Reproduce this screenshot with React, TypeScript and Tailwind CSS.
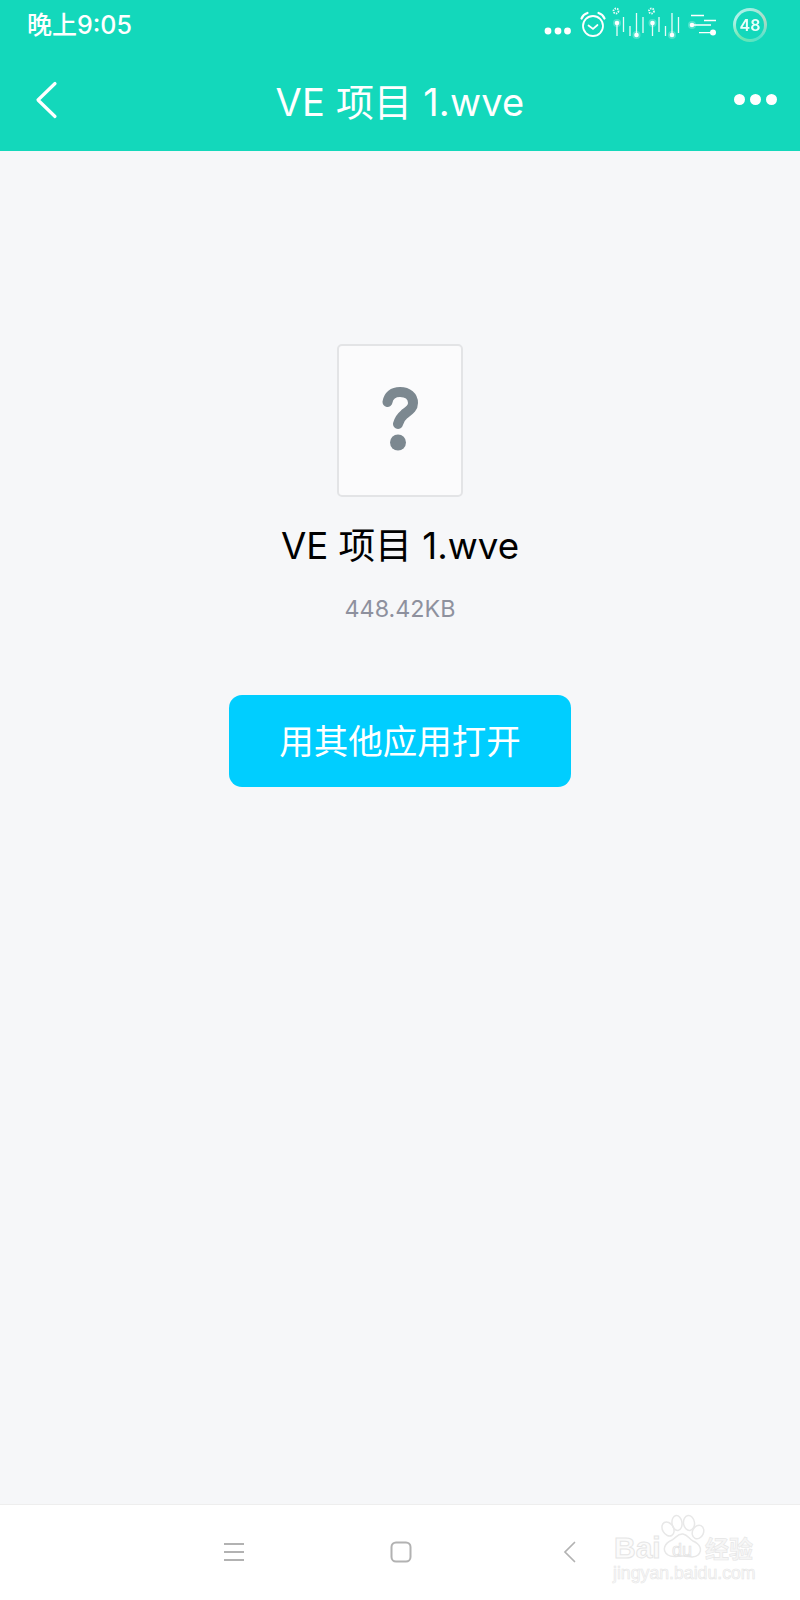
const CJK = "font-['Inter','Noto_Sans_CJK_SC',sans-serif]";

function SignalBars({ x }: { x: number }) {
  return (
    <g transform={`translate(${x} 0)`}>
      <g stroke="#fff" fill="none" strokeWidth="1.300" opacity="0.9">
        <path d="M0 22V36M6.500 17V32M13 26V36M19.500 13V36M26 17V33" />
        <circle cx="-1" cy="11" r="2.500" strokeWidth="1.800" strokeDasharray="1.500 1" />
      </g>
      <circle cx="0" cy="23" r="4" fill="#fff" opacity="0.25" />
      <circle cx="0" cy="23" r="2.300" fill="#fff" />
      <circle cx="19.500" cy="35" r="4" fill="#fff" opacity="0.25" />
      <circle cx="19.500" cy="35" r="2.300" fill="#fff" />
    </g>
  );
}

function StatusIcons() {
  return (
    <svg width="190" height="50" viewBox="0 0 190 50" className="block">
      <g fill="#fff">
        <circle cx="9" cy="31" r="3.400" />
        <circle cx="19" cy="31" r="3.400" />
        <circle cx="28.500" cy="31" r="3.400" />
      </g>
      <g stroke="#fff" fill="none" strokeLinecap="round">
        <circle cx="54" cy="26" r="10" strokeWidth="1.800" />
        <path d="M49.500 25.500l4.500 3.500 4.500-4" strokeWidth="1.700" />
        <path d="M42.500 18.500c1-2.500 3-4.500 6-5.500M65.500 18.500c-1-2.500-3-4.500-6-5.500" strokeWidth="2.200" />
      </g>
      <SignalBars x={78} />
      <SignalBars x={113.500} />
      <g stroke="#fff" fill="none" strokeWidth="1.300">
        <path d="M152 15.500h13M165 20.500h12M153 25h19M160 32.700h14" />
      </g>
      <circle cx="153" cy="25" r="4" fill="#fff" opacity="0.25" />
      <circle cx="153" cy="25" r="2.300" fill="#fff" />
      <circle cx="174" cy="32.500" r="3" fill="#fff" />
    </svg>
  );
}

function Header() {
  return (
    <header className="bg-[#13d8bb] h-[151px] shrink-0 flex flex-col text-white">
      <div className="h-[50px] flex items-center justify-between pl-[27px] pr-[33px]">
        <span className={`${CJK} text-[25px] leading-none font-medium`}>晚上9:05</span>
        <div className="flex items-center gap-[4px]">
          <StatusIcons />
          <div className="w-[34px] h-[34px] rounded-full p-[3px] blur-[0.4px] bg-[conic-gradient(#ffffff99,#ffd9c7aa,#ffffff44,#d7f7a077,#ffffffaa,#ffffff99)] flex items-center justify-center">
            <div className="w-full h-full rounded-full bg-[#13d8bb] flex items-center justify-center">
              <span className="font-['Inter',sans-serif] text-[16px] font-semibold leading-none text-[#eafffa]">48</span>
            </div>
          </div>
        </div>
      </div>
      <div className="flex-1 flex items-center justify-between pl-[35px] pr-[23px] pb-[2px]">
        <svg width="24" height="38" viewBox="0 0 24 38" fill="none" className="block">
          <path d="M20 2.500L3 19l17 16.500" stroke="#fff" strokeWidth="3.200" strokeLinecap="round" strokeLinejoin="round" />
        </svg>
        <h1 className={`${CJK} text-[38px] leading-none font-normal tracking-[0.2px] mt-[4px] ml-[7px]`}>VE 项目 1.wve</h1>
        <div className="flex gap-[5px]">
          <span className="w-[11px] h-[11px] rounded-full bg-white" />
          <span className="w-[11px] h-[11px] rounded-full bg-white" />
          <span className="w-[11px] h-[11px] rounded-full bg-white" />
        </div>
      </div>
    </header>
  );
}

function FileCard() {
  return (
    <div className="w-[126px] h-[153px] rounded-[5px] border-2 border-[#e3e4e6] bg-[#fbfbfc] flex items-center justify-center">
      <svg width="36" height="64" viewBox="0 0 36 64" fill="none" className="block -mt-[4px]">
        <path
          d="M5.500 15C6.500 8.500 11 5 18 5C26 5 31 9.500 31 16C31 22 26 24 22 27.500C19 30 17 33 16 37"
          stroke="#7c8890"
          strokeWidth="10"
          strokeLinecap="round"
        />
        <circle cx="16" cy="55.500" r="8" fill="#7c8890" />
      </svg>
    </div>
  );
}

function Watermark() {
  return (
    <div className="absolute left-[613px] top-0 w-[150px] h-[90px]">
      <svg width="60" height="60" viewBox="0 0 60 60" fill="none" stroke="#e8e8e8" strokeWidth="1.500" className="absolute left-[45px] top-0 block">
        <ellipse cx="10" cy="24" rx="5.500" ry="7.500" transform="rotate(-30 10 24)" />
        <ellipse cx="19" cy="18" rx="5" ry="7.500" transform="rotate(-8 19 18)" />
        <ellipse cx="31" cy="18" rx="5.500" ry="7.500" transform="rotate(-8 31 18)" />
        <ellipse cx="40" cy="27" rx="5.500" ry="7" transform="rotate(25 40 27)" />
        <path d="M10 50c-7-5-3-12 4-15 4-2 6-7 11-6 5 1 6 5 10 7 7 3 10 9 5 14-4 4-9 1-15 1-6 0-11 2-15-1z" />
      </svg>
      <span className="absolute left-[1px] top-[28px] font-['Liberation_Sans',sans-serif] text-[30px] leading-none font-bold text-[#fbfbfb] [-webkit-text-stroke:1px_#e6e6e6]">Bai</span>
      <span className="absolute left-[59px] top-[36px] font-['Liberation_Sans',sans-serif] text-[18px] leading-none text-[#fbfbfb] [-webkit-text-stroke:0.7px_#e2e2e2]">du</span>
      <span className="absolute left-[92px] top-[31px] font-['Noto_Sans_CJK_SC',sans-serif] text-[24px] leading-none font-bold text-[#f6f6f6] [-webkit-text-stroke:0.6px_#e6e6e6]">经验</span>
      <span className="absolute left-0 top-[60px] font-['Liberation_Sans',sans-serif] text-[17.700px] leading-none text-[#fbfbfb] [-webkit-text-stroke:0.6px_#e6e6e6]">jingyan.baidu.com</span>
    </div>
  );
}

function NavBar() {
  return (
    <nav className="relative h-[96px] shrink-0 bg-white border-t border-[#eeeeee] flex items-center justify-center pb-[1px]">
      <div className="flex items-center">
        <svg width="20" height="18" viewBox="0 0 20 18" fill="none" stroke="#b2b2b2" strokeWidth="2" className="block">
          <path d="M0 1h20M0 9h20M0 17h20" />
        </svg>
        <svg width="22" height="22" viewBox="0 0 22 22" fill="none" stroke="#b2b2b2" strokeWidth="2" className="block ml-[146px]">
          <rect x="1.500" y="1.500" width="19" height="19" rx="4.500" />
        </svg>
        <svg width="13" height="24" viewBox="0 0 13 24" fill="none" stroke="#b2b2b2" strokeWidth="1.700" strokeLinecap="round" className="block ml-[151px]">
          <path d="M11.500 2.500L2 12l9.500 9.500" />
        </svg>
      </div>
      <Watermark />
    </nav>
  );
}

export default function App() {
  return (
    <div className="w-[800px] h-[1600px] flex flex-col bg-[#f6f7f9] overflow-hidden">
      <Header />
      <main className="flex-1 flex flex-col items-center pt-[193px]">
        <FileCard />
        <div className={`${CJK} mt-[27px] text-[36.700px] leading-[44px] text-black`}>VE 项目 1.wve</div>
        <div className="mt-[27px] font-['Inter',sans-serif] text-[23.300px] leading-[28px] text-[#8e919e]">448.42KB</div>
        <button className={`${CJK} mt-[72px] w-[342px] h-[92px] pt-[2px] rounded-[13px] bg-[#00ceff] text-white text-[34.500px] leading-none`}>
          用其他应用打开
        </button>
      </main>
      <NavBar />
    </div>
  );
}
